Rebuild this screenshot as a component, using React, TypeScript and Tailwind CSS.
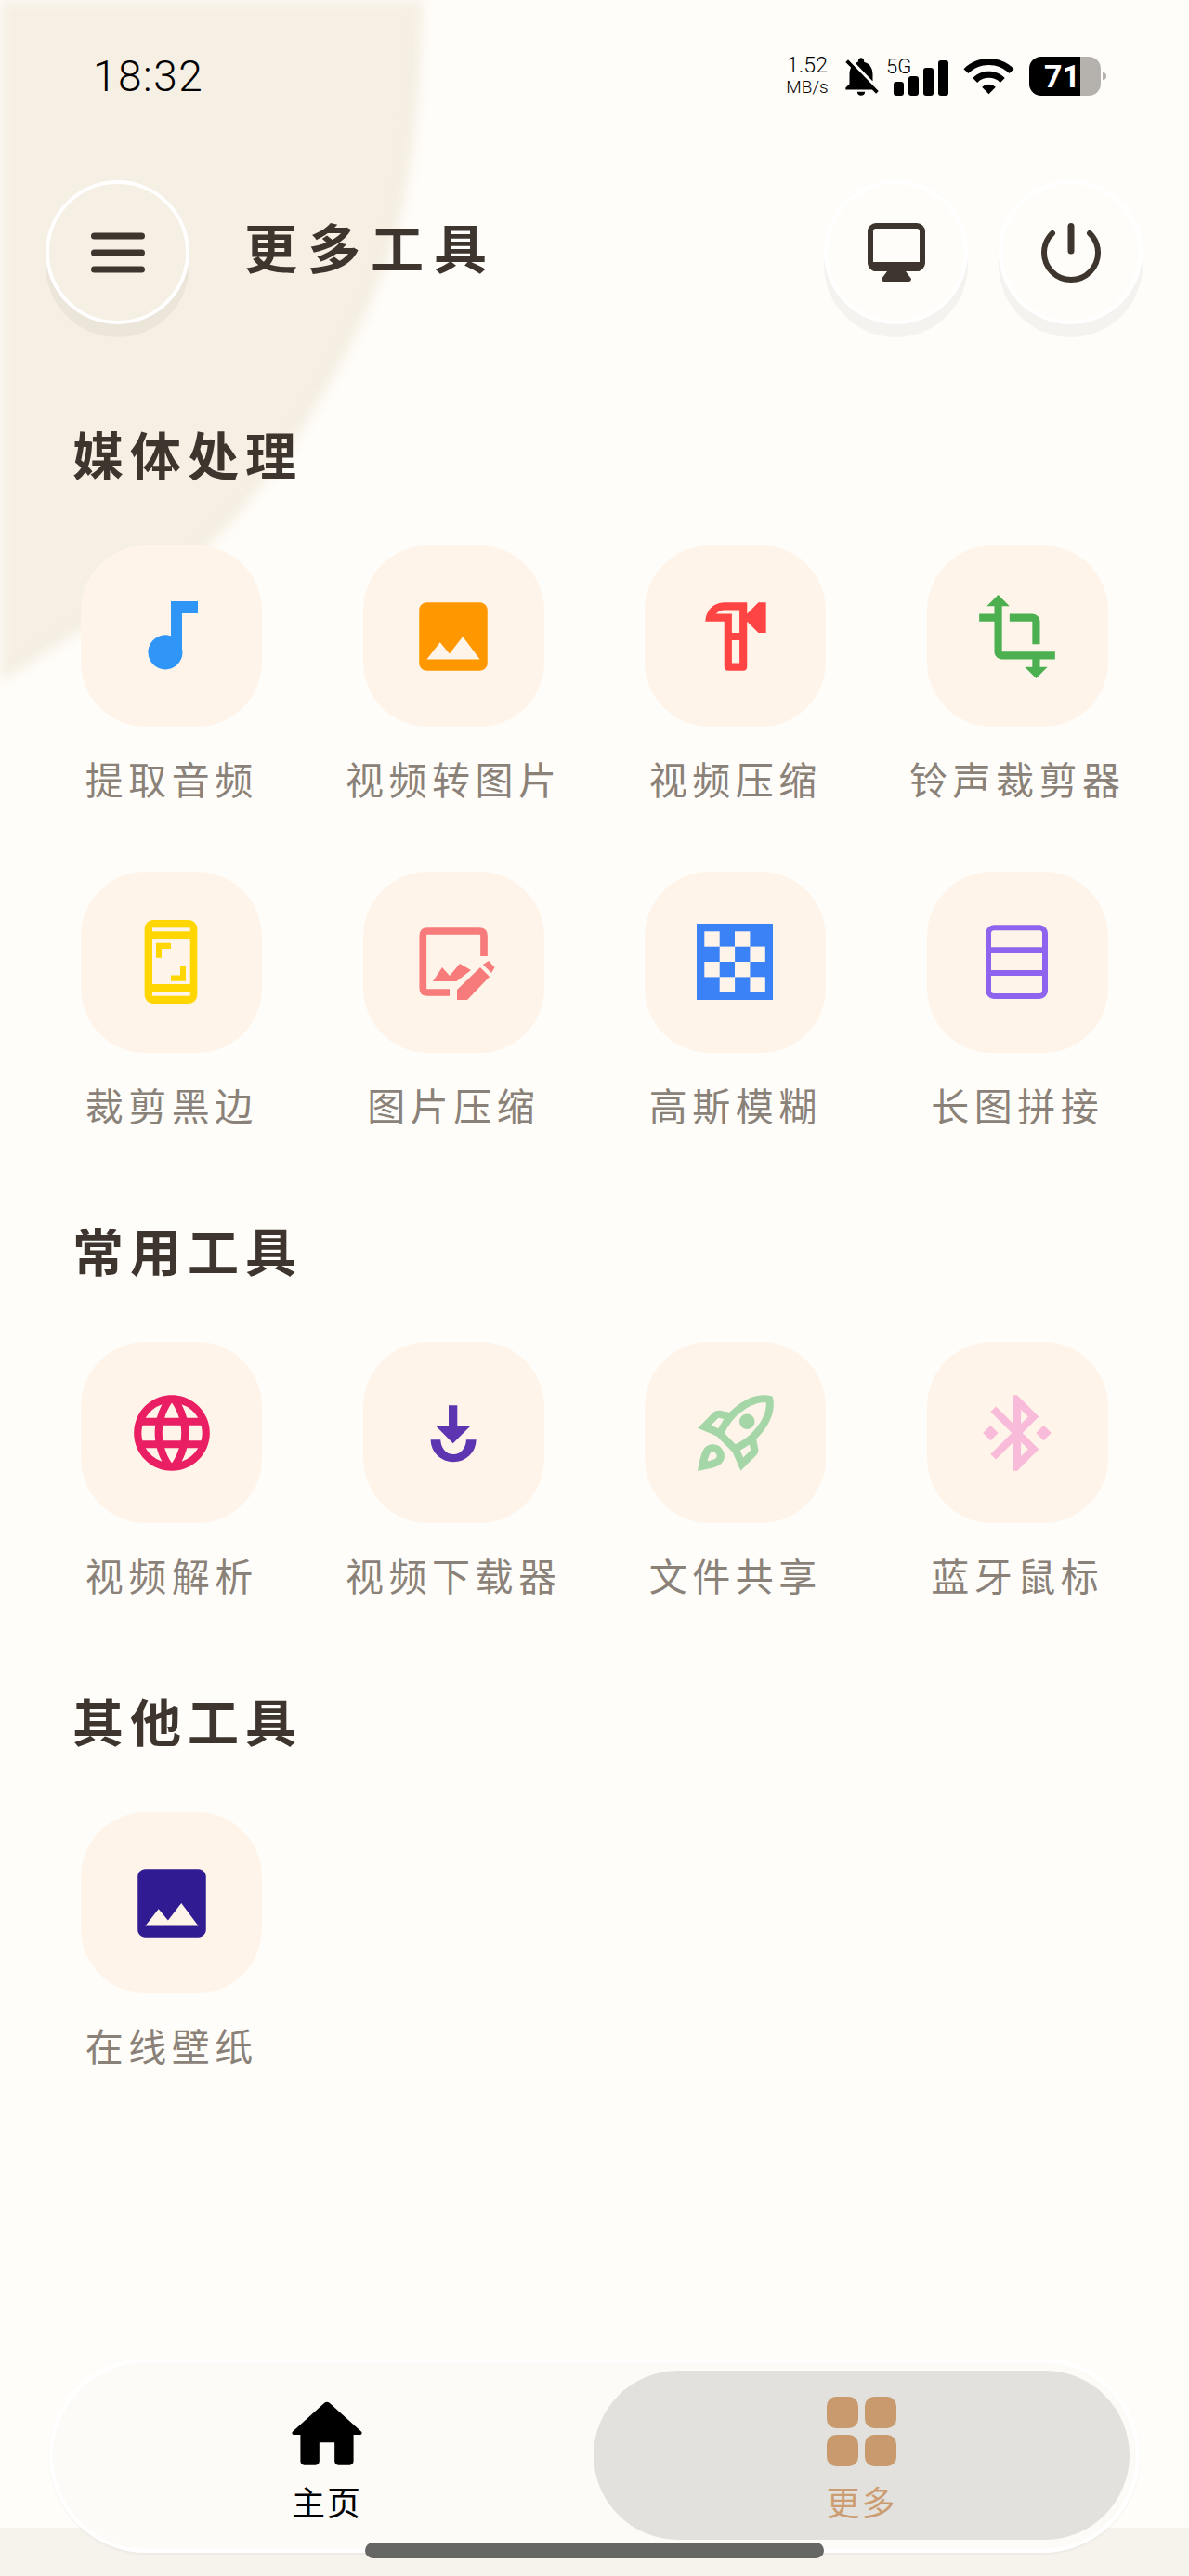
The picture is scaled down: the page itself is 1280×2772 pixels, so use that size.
import { MdBluetoothConnected, MdImage, MdLanguage, MdNotificationsOff, MdOutlineHardware, MdOutlineRocketLaunch, MdTransform, MdWifi } from "react-icons/md";
import type { ReactNode } from "react";

const TILE = "#fff4e9";

const Frame = ({ children }: { children: ReactNode }) => (
    <svg viewBox="0 0 195 195" className="size-full">
        {children}
    </svg>
);

const MusicIcon = () => (
    <Frame>
        <path d="M97 60H126V73H109V115H72.5V115A18.5 18.5 0 0 1 97 97.5Z" fill="#2f96f7" />
        <circle cx="91" cy="115" r="18.5" fill="#2f96f7" />
    </Frame>
);

const PhoneCropIcon = () => (
    <Frame>
        <rect x="68.7" y="52" width="56.6" height="90" rx="9" fill="#ffd600" />
        <rect x="77" y="60.3" width="40.7" height="4" fill={TILE} />
        <rect x="77" y="72" width="40.7" height="49" fill={TILE} />
        <rect x="77" y="129.7" width="40.7" height="4" fill={TILE} />
        <path d="M81 76.7H97V83H87V92.7H81Z" fill="#ffd600" />
        <path d="M113 117.7H97V111.4H107V101.7H113Z" fill="#ffd600" />
    </Frame>
);

const ImageEditIcon = () => (
    <Frame>
        <path d="M93 130H69Q64.3 130 64.3 125V69Q64.3 64 69 64H125Q130 64 130 69V91" fill="none" stroke="#f77b7b" strokeWidth="7.7" />
        <path d="M75 118L85 103L93 112L104 99L116 106L100.5 118Z" fill="#f77b7b" />
        <path d="M101 138V127L126 103L136 113L112 138Z" fill="#f77b7b" />
        <path d="M129 100L135 96L141.5 103L138 109Z" fill="#f77b7b" />
    </Frame>
);

const CheckerIcon = () => {
    const cells = [
        [64.3, 64.3], [97, 64.3],
        [80.7, 80.6], [113.4, 80.6],
        [64.3, 97], [97, 97],
        [80.7, 113.3], [113.4, 113.3],
    ];
    return (
        <Frame>
            <rect x="56" y="56" width="82" height="82" fill="#3b82f6" />
            {cells.map(([x, y]) => (
                <rect key={`${x}-${y}`} x={x} y={y} width="16.4" height="16.4" fill={TILE} />
            ))}
        </Frame>
    );
};

const StackIcon = () => (
    <Frame>
        <rect x="66" y="60.3" width="61" height="73.7" rx="6" fill="none" stroke="#8e63ee" strokeWidth="6" />
        <path d="M66 84.3H127M66 109H127" stroke="#8e63ee" strokeWidth="6" />
    </Frame>
);

const DownloadIcon = () => (
    <Frame>
        <path d="M92 68.3H101.300V91H115L96.700 109.300L78.700 91H92Z" fill="#5e35b1" />
        <path d="M72.600 105.300A24.500 24 0 0 0 121.600 105.300H110.900A13.800 15.700 0 0 1 83.300 105.300Z" fill="#5e35b1" />
    </Frame>
);

type Tool = { label: string; icon: ReactNode };

const media: Tool[] = [
    { label: "提取音频", icon: <MusicIcon /> },
    { label: "视频转图片", icon: <MdImage size={98} color="#ff9800" /> },
    { label: "视频压缩", icon: <MdOutlineHardware size={98} color="#ff4444" /> },
    { label: "铃声裁剪器", icon: <MdTransform size={98} color="#4caf50" /> },
    { label: "裁剪黑边", icon: <PhoneCropIcon /> },
    { label: "图片压缩", icon: <ImageEditIcon /> },
    { label: "高斯模糊", icon: <CheckerIcon /> },
    { label: "长图拼接", icon: <StackIcon /> },
];

const common: Tool[] = [
    { label: "视频解析", icon: <MdLanguage size={98} color="#e91e63" /> },
    { label: "视频下载器", icon: <DownloadIcon /> },
    { label: "文件共享", icon: <MdOutlineRocketLaunch size={98} color="#a5d6a7" /> },
    { label: "蓝牙鼠标", icon: <MdBluetoothConnected size={98} color="#f8bbd9" /> },
];

const other: Tool[] = [{ label: "在线壁纸", icon: <MdImage size={98} color="#311b92" /> }];

const ToolItem = ({ tool }: { tool: Tool }) => (
    <div className="flex flex-col items-center">
        <div className="flex h-[195px] w-[195px] items-center justify-center rounded-[70px] bg-[#fff4e9]">{tool.icon}</div>
        <div className="mt-[30px] h-[53px] whitespace-nowrap text-[41px] leading-[50px] tracking-[5.5px] text-[#8a8178]">{tool.label}</div>
    </div>
);

const Section = ({ title, tools, className }: { title: string; tools: Tool[]; className: string }) => (
    <section className={className}>
        <h2 className="ml-[78px] h-[60px] text-[55px] font-bold leading-[54px] tracking-[7px] text-[#3d352e]">{title}</h2>
        <div className="mt-[67px] grid grid-cols-4 gap-y-[73px] px-[33px]">
            {tools.map((tool) => (
                <ToolItem key={tool.label} tool={tool} />
            ))}
        </div>
    </section>
);

const RoundButton = ({ children, tinted }: { children: ReactNode; tinted?: boolean }) => (
    <button
        className={`flex h-[155px] w-[155px] items-center justify-center rounded-full border-[4px] shadow-[0_14px_0_rgba(0,0,0,0.04)] ${
            tinted ? "border-white bg-[#f6efe3]" : "border-[#ffffff] bg-[#fffdf9]"
        }`}
    >
        {children}
    </button>
);

const StatusBar = () => (
    <div className="relative mt-[58px] flex h-[47px] items-center justify-between pl-[100px] pr-[89px] font-['Roboto',sans-serif] text-black">
        <span className="text-[46px] font-light leading-none tracking-[1.5px]">18:32</span>
        <div className="flex h-[47px] items-center">
            <div className="flex w-[42px] flex-col items-center font-light">
                <span className="text-[23px] leading-[24px]">1.52</span>
                <span className="text-[19px] leading-[22px]">MB/s</span>
            </div>
            <MdNotificationsOff size={50} className="ml-[12px]" />
            <div className="relative ml-[10px] h-[47px] w-[59px]">
                <span className="absolute -left-[8px] top-[2px] text-[22px] font-light leading-[24px]">5G</span>
                <div className="absolute bottom-[2px] left-0 flex items-end gap-[5px]">
                    <div className="h-[15px] w-[11px] rounded-[3px] bg-black" />
                    <div className="h-[21px] w-[11px] rounded-[3px] bg-black" />
                    <div className="h-[30px] w-[11px] rounded-[3px] bg-black" />
                    <div className="h-[38px] w-[11px] rounded-[3px] bg-black" />
                </div>
            </div>
            <MdWifi size={59} className="ml-[14px]" />
            <div className="ml-[14px] flex h-[42px] w-[77px] overflow-hidden rounded-[13px] bg-[#b5b1ad]">
                <div className="flex h-full w-[55px] items-center justify-end overflow-hidden bg-black">
                    <span className="text-[34px] font-bold leading-none text-white">71</span>
                </div>
            </div>
            <div className="ml-[2px] h-[8px] w-[4px] rounded-r-full bg-[#b5b1ad]" />
        </div>
    </div>
);

const Header = () => (
    <header className="relative mt-[89px] flex h-[155px] items-center pl-[49px] pr-[50px]">
        <RoundButton tinted>
            <svg width="58" height="44" viewBox="0 0 58 44">
                <path d="M3.500 4H54.500M3.500 22H54.500M3.500 40H54.500" stroke="#3d352e" strokeWidth="7" strokeLinecap="round" />
            </svg>
        </RoundButton>
        <h1 className="mb-[14px] ml-[59px] text-[57px] font-bold leading-none tracking-[11px] text-[#3d352e]">更多工具</h1>
        <div className="ml-auto flex gap-[33px]">
            <RoundButton>
                <svg width="62" height="63" viewBox="0 0 62 63">
                    <rect x="3" y="3" width="56" height="46" rx="6" fill="none" stroke="#3d352e" strokeWidth="6" />
                    <path d="M3 42H59V46Q59 52 53 52H9Q3 52 3 46Z" fill="#3d352e" />
                    <path d="M21 52H41L47 60Q47 63 44 63H18Q15 63 15 60Z" fill="#3d352e" />
                </svg>
            </RoundButton>
            <RoundButton>
                <svg width="64" height="64" viewBox="0 0 64 64">
                    <path d="M32 3.500V30" stroke="#3d352e" strokeWidth="7" strokeLinecap="round" />
                    <path d="M12 11A29 29 0 1 0 52 11" fill="none" stroke="#3d352e" strokeWidth="6" strokeLinecap="round" />
                </svg>
            </RoundButton>
        </div>
    </header>
);

const BottomNav = () => (
    <nav className="relative mx-[53px] mb-[25px] mt-auto flex h-[209px] rounded-full border-[4px] border-white bg-[#fdfbf7] pb-[10px] pt-[9px] shadow-[0_2px_2px_rgba(0,0,0,0.04)]">
        <div className="flex w-[582px] flex-col items-center pl-[8px] pt-[20px]">
            <svg width="98" height="98" viewBox="0 0 24 24" fill="#000">
                <path d="M10 19v-5h4v5c0 .55.45 1 1 1h3c.55 0 1-.45 1-1v-7h1.700c.46 0 .68-.57.33-.87L12.670 3.600c-.38-.34-.96-.34-1.340 0l-8.360 7.530c-.34.300-.13.870.33.870H5v7c0 .55.45 1 1 1h3c.55 0 1-.45 1-1z" />
            </svg>
            <span className="mt-[2px] text-[36px] leading-[40px] tracking-[2px] text-black">主页</span>
        </div>
        <div className="flex w-[577px] flex-col items-center rounded-full bg-[#e2e1dd] pt-[28px]">
            <div className="grid grid-cols-2 gap-[7px]">
                <div className="h-[34px] w-[34px] rounded-[10px] bg-[#c99a6d]" />
                <div className="h-[34px] w-[34px] rounded-[10px] bg-[#c99a6d]" />
                <div className="h-[34px] w-[34px] rounded-[10px] bg-[#c99a6d]" />
                <div className="h-[34px] w-[34px] rounded-[10px] bg-[#c99a6d]" />
            </div>
            <span className="mt-[17px] text-[36px] leading-[40px] tracking-[2px] text-[#cc9d72]">更多</span>
        </div>
    </nav>
);

export default function App() {
    return (
        <div className="relative flex h-[2772px] w-full flex-col overflow-hidden bg-[#fffdf9] font-['Noto_Sans_CJK_SC',sans-serif]">
            {/* wallpaper blob behind the header */}
            <svg width="500" height="780" viewBox="0 0 500 780" className="absolute left-0 top-0 blur-[7px]">
                <path
                    d="M-20 -20H450C448 60 446 130 433 200C420 270 395 325 367 380C345 420 325 455 300 490C275 525 248 557 217 587C180 620 135 645 87 673C55 692 25 712 -20 740Z"
                    fill="#f6efe3"
                    stroke="#f3ebdd"
                    strokeWidth="8"
                />
            </svg>
            <div className="absolute inset-x-0 bottom-0 h-[52px] bg-[#f6f3ec]" />
            <StatusBar />
            <Header />
            <Section className="relative mt-[111px]" title="媒体处理" tools={media} />
            <Section className="relative mt-[101px]" title="常用工具" tools={common} />
            <Section className="relative mt-[101px]" title="其他工具" tools={other} />
            <BottomNav />
            {/* gesture bar sits over the nav */}
            <div className="absolute bottom-[19px] left-[393px] h-[17px] w-[494px] rounded-full bg-[#666664]" />
        </div>
    );
}
